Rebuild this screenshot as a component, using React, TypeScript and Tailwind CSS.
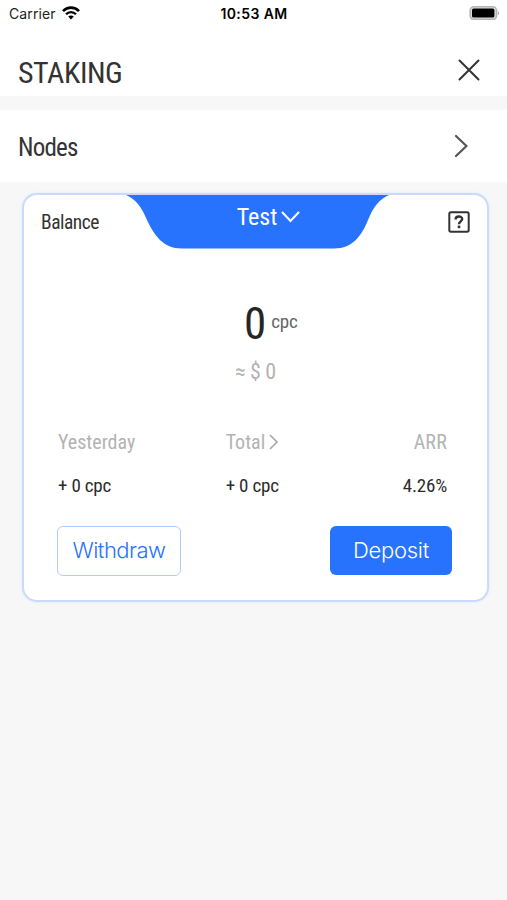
import type { ReactNode } from 'react';

const condensed = "font-['Roboto_Condensed','Roboto',sans-serif] [font-stretch:75%]";

function StatusBar() {
  return (
    <div className="grid h-7 grid-cols-3 items-center pl-[9px] pr-[7px] font-['Inter',sans-serif] text-black">
      <div className="flex items-center gap-[6px]">
        <span className="text-[14px] leading-7 tracking-[0.1px] text-[#222]">Carrier</span>
        <svg className="mb-[2px] h-[14px] w-[18px]" viewBox="0 0 18 14" fill="none" stroke="black">
          <path d="M1 5.1C5.4 .4 12.6 .4 17 5.1" strokeWidth="2.6" />
          <path d="M4 8.2C6.8 5.3 11.2 5.3 14 8.2" strokeWidth="2.3" />
          <path d="M9 13.4 6.2 10.5C7.8 9.1 10.2 9.1 11.8 10.5Z" fill="black" stroke="none" />
        </svg>
      </div>
      <div className="-ml-px whitespace-nowrap pb-px text-center text-[14px] font-semibold tracking-[0.4px]">
        10:53 AM
      </div>
      <svg className="mb-[2px] h-[14px] w-[31px] justify-self-end" viewBox="0 0 31 14">
        <rect x="1.2" y=".8" width="26.3" height="12.6" rx="3.6" fill="#ddd" stroke="#b5b5b5" strokeWidth="1.6" />
        <rect x="3" y="2.6" width="22.4" height="9" rx="1.6" fill="#000" />
        <path d="M28.8 4.9C30.6 5.6 30.6 8.6 28.8 9.3Z" fill="#aaa" />
      </svg>
    </div>
  );
}

function Stat({ label, value, className = '' }: { label: ReactNode; value: string; className?: string }) {
  return (
    <div className={`flex flex-col text-[20px] ${className}`}>
      <div className="flex h-6 items-center gap-1 text-[#b3b3b3]">{label}</div>
      <div className="mt-5 h-6 text-[19px] leading-6 tracking-[-0.2px] text-[#2b2b2b]">{value}</div>
    </div>
  );
}

export default function App() {
  return (
    <div className={`h-[900px] w-[507px] overflow-hidden bg-[#f7f7f7] text-[#333] ${condensed}`}>
      <header className="h-24 bg-white">
        <StatusBar />
        <div className="flex h-[68px] items-center justify-between pl-[18px] pr-[27px]">
          <h1 className="pt-[22px] text-[30px] leading-[68px] tracking-[-0.45px]">STAKING</h1>
          <svg className="mt-[15px] h-[22px] w-[22px]" viewBox="0 0 22 22" stroke="#333" strokeWidth="2" strokeLinecap="round">
            <path d="M1.5 1.5 20.5 20.5M20.5 1.5 1.5 20.5" />
          </svg>
        </div>
      </header>

      <div className="mt-[14px] flex h-[72px] items-center justify-between bg-white pl-[18px] pr-[39px]">
        <span className="pt-[3px] text-[25px] tracking-[-0.8px]">Nodes</span>
        <svg className="h-[24px] w-[14px]" viewBox="0 0 14 24" fill="none" stroke="#555" strokeWidth="2.2" strokeLinecap="round">
          <path d="M2 2 12.5 12 2 22" />
        </svg>
      </div>

      <main className="relative ml-[22px] mt-[11px] h-[409px] w-[467px] rounded-[15px] border-2 border-[#cbdafb] bg-white shadow-[0_0_3px_#dbe6fc]">
        <div className="absolute left-[101px] top-0 h-[54px] w-[266px]">
          <svg className="h-full w-full" viewBox="0 0 266 54">
            <path d="M1 0C11 4 17 13 22 25C29 40 38 53.5 57 53.5H209C228 53.5 237 40 243 25C248 13 254 4 264 0Z" fill="#2773fe" />
          </svg>
        </div>
        <div className="relative grid h-[54px] grid-cols-3">
          <span className="ml-[17px] pt-4 text-[19.5px] leading-6 tracking-[-0.5px]">Balance</span>
          <div className="flex h-11 items-center justify-center gap-1 pl-[26px] text-[24px] text-white">
            <span>Test</span>
            <svg className="h-[12px] w-[19px]" viewBox="0 0 19 12" fill="none" stroke="white" strokeWidth="2" strokeLinecap="round">
              <path d="M1.5 1.5 9.5 10 17.5 1.5" />
            </svg>
          </div>
          <svg className="mr-[17px] mt-4 h-[22px] w-[22px] justify-self-end" viewBox="0 0 22 22" fill="none" stroke="#333" strokeWidth="2">
            <rect x="1.3" y="1.3" width="19.4" height="19.4" rx="1.6" />
            <path d="M7.6 8.4C7.6 4.6 14.2 4.6 14.2 8.1C14.2 10.3 11 10.5 11 13.2" strokeWidth="2.4" />
            <path d="M11 14.6V17.2" strokeWidth="2.6" />
          </svg>
        </div>

        <div className="mt-[50px] flex h-[50px] items-center pl-[220px]">
          <span className="text-[45px] leading-[50px] tracking-[-1px] text-[#262626]">0</span>
          <span className="ml-[6px] pb-[3px] text-[19px] tracking-[-0.2px] text-[#666]">cpc</span>
        </div>
        <div className="mt-[11px] h-6 pl-[211px] text-[22px] leading-6 tracking-[-0.4px] text-[#b3b3b3]">≈ $ 0</div>

        <div className="mt-[46px] grid h-[68px] grid-cols-3 pl-[34px] pr-[40px]">
          <Stat label="Yesterday" value="+ 0 cpc" />
          <Stat
            className="pl-[38px]"
            value="+ 0 cpc"
            label={
              <>
                <span>Total</span>
                <svg className="h-4 w-[9px]" viewBox="0 0 9 16" fill="none" stroke="#aaa" strokeWidth="1.7">
                  <path d="M1 1 8 8 1 15" />
                </svg>
              </>
            }
          />
          <Stat className="items-end" label={<span className="tracking-[0.2px]">ARR</span>} value="4.26%" />
        </div>

        <div className="mt-7 flex justify-between pl-[33px] pr-[35px] font-['Inter',sans-serif] text-[22px] font-[350] tracking-[-0.5px] [font-stretch:100%]">
          <button className="h-[50px] w-[124px] rounded-[6px] border border-[#afcbfb] pb-[2px] text-[#2773fe]">
            Withdraw
          </button>
          <button className="h-[49px] w-[122px] rounded-[6px] bg-[#2773fe] text-white">
            <span className="tracking-[-0.3px]">Deposit</span>
          </button>
        </div>
      </main>
    </div>
  );
}
